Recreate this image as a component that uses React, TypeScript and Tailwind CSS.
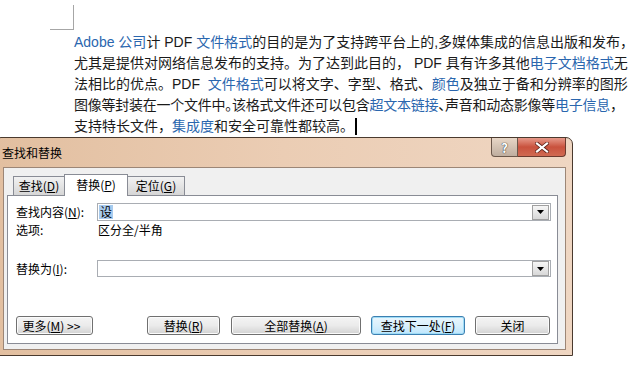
import React from "react";

const blue = "text-[#2a66ae]";

function L({ children }: { children: React.ReactNode }) {
  return <span className={blue}>{children}</span>;
}

function H({ c }: { c: string }) {
  return <span className="[font-feature-settings:'halt']">{c}</span>;
}

function Btn({ children, w, def = false, className = "" }: { children: React.ReactNode; w: string; def?: boolean; className?: string }) {
  return (
    <div
      className={
        "h-[19px] rounded-[3px] border flex items-center justify-center " +
        w +
        " " +
        className +
        " " +
        (def
          ? "border-[#3c7fb1] bg-gradient-to-b from-[#eaf6fd] via-[#d9f0fc] to-[#bee6fd] shadow-[inset_0_0_0_1px_#9fdcf6]"
          : "border-[#707070] bg-gradient-to-b from-[#f4f4f4] via-[#ebebeb] to-[#d2d2d2] shadow-[inset_0_0_0_1px_#fbfbfb]")
      }
    >
      {children}
    </div>
  );
}

function U({ c }: { c: string }) {
  return <span className="underline underline-offset-[1px]">{c}</span>;
}

function DropBtn() {
  return (
    <div className="w-[17px] h-[15px] mr-[1px] border border-[#a0a0a0] bg-gradient-to-b from-[#f6f6f6] to-[#d8d8d8] flex items-center justify-center">
      <svg width="7" height="4" viewBox="0 0 7 4">
        <path d="M0 0 H7 L3.5 4 Z" fill="#000" />
      </svg>
    </div>
  );
}

export default function App() {
  return (
    <div
      className="relative w-[628px] h-[365px] overflow-hidden bg-white"
      style={{ fontFamily: '"Liberation Sans", "Noto Sans CJK SC", sans-serif' }}
    >
      {/* page corner mark */}
      <div className="ml-[50px] mt-[5px] w-[24px] h-[25px] border-r border-b border-[#a6a6a6]" />
      {/* document text */}
      <div className="mt-[2px] pl-[74px] text-[14px] leading-[21px] text-[#1a1a1a] whitespace-nowrap">
        <div>
          <L>Adobe 公司</L>计 PDF <L>文件格式</L>的目的是为了支持跨平台上的,多媒体集成的信息出版和发布，
        </div>
        <div>
          尤其是提供对网络信息发布的支持。为了达到此目的， PDF 具有许多其他<L>电子文档格式</L>无
        </div>
        <div>
          法相比的优点。PDF &nbsp;<L>文件格式</L>可以将文字、字型、格式、<L>颜色</L>及独立于备和分辨率的图形
        </div>
        <div className="tracking-[-0.25px]">
          图像等封装在一个文件中<H c="。" />该格式文件还可以包含<L>超文本链接</L>
          <H c="、" />声音和动态影像等<L>电子信息</L>，
        </div>
        <div className="flex items-center">
          <span>
            支持特长文件，<L>集成度</L>和安全可靠性都较高。
          </span>
          <span className="inline-block w-[2px] h-[17px] bg-black ml-[1px]" />
        </div>
      </div>

      {/* dialog */}
      <div
        className="absolute left-[-6px] top-[137px] w-[579px] h-[219px] rounded-t-[7px] border border-[#4a3a2e] bg-gradient-to-r from-[#e2bfa0] via-[#ebcdb4] to-[#efd6c2] pl-[8px] pr-[6px] pb-[5px] flex flex-col text-[12px] text-black"
        style={{ fontFamily: '"Noto Sans CJK SC", sans-serif' }}
      >
        <div className="h-[29px] flex items-start justify-between">
          <div className="ml-[-1px] mt-[6px] text-[12px] leading-[18px]">查找和替换</div>
          <div className="flex">
            <div className="w-[27px] h-[19px] rounded-bl-[4px] border border-t-0 border-[#6b574a] bg-gradient-to-b from-[#e8d6c6] to-[#bfae9f] flex items-center justify-center">
              <span className="text-[13px] font-bold leading-none text-white [text-shadow:0_0_1px_#333,0_0_1px_#333]">?</span>
            </div>
            <div className="w-[48px] h-[19px] rounded-br-[4px] border border-t-0 border-l-0 border-[#6b3a2e] bg-gradient-to-b from-[#e6998a] via-[#c9513d] to-[#d06a52] flex items-center justify-center">
              <svg width="14" height="11" viewBox="0 0 14 11">
                <path d="M2 1.5 L12 9.5 M12 1.5 L2 9.5" stroke="#5a2018" strokeWidth="3.6" strokeLinecap="square" />
                <path d="M2 1.5 L12 9.5 M12 1.5 L2 9.5" stroke="#ffffff" strokeWidth="2.2" strokeLinecap="square" />
              </svg>
            </div>
          </div>
        </div>

        <div className="h-[183px] border border-[#9c8676] bg-[#f0f0f0] pl-[3px] pr-[7px] pt-[6px] pb-[5px] flex flex-col">
          {/* tabs */}
          <div className="h-[21px] pl-[6px] flex items-end">
            <div className="w-[52px] h-[19px] border border-b-0 border-[#898c95] bg-gradient-to-b from-[#f2f2f2] to-[#d6d6d6] flex items-center justify-center">
              查找(<U c="D" />)
            </div>
            <div className="relative z-10 w-[64px] h-[22px] -mb-px ml-[-1px] border border-b-0 border-[#898c95] bg-white flex items-center justify-center pb-[2px]">
              替换(<U c="P" />)
            </div>
            <div className="w-[58px] h-[19px] ml-[-1px] border border-b-0 border-[#898c95] bg-gradient-to-b from-[#f2f2f2] to-[#d6d6d6] flex items-center justify-center">
              定位(<U c="G" />)
            </div>
          </div>
          {/* content panel */}
          <div className="h-[149px] border border-[#898c95] bg-white pl-[8px] pr-[6px] pt-[7px] flex flex-col">
            <div className="h-[18px] flex items-center">
              <div className="w-[81px]">
                查找内容(<U c="N" />):
              </div>
              <div className="w-[454px] h-[18px] border border-[#a9adb3] flex items-center justify-between">
                <span className="ml-[1px] px-[1px] bg-[#a8cbee] leading-[14px]">设</span>
                <DropBtn />
              </div>
            </div>
            <div className="h-[16px] mt-[1px] flex items-center">
              <div className="w-[82px]">选项:</div>
              <div>区分全/半角</div>
            </div>
            <div className="h-[17px] mt-[22px] flex items-center">
              <div className="w-[81px]">
                替换为(<U c="I" />):
              </div>
              <div className="w-[454px] h-[17px] border border-[#a9adb3] flex items-center justify-end">
                <DropBtn />
              </div>
            </div>
            <div className="mt-[39px] flex items-center">
              <Btn w="w-[77px]">
                <span className="ml-[-6px]">
                  更多(<U c="M" />) &gt;&gt;
                </span>
              </Btn>
              <Btn w="w-[73px]" className="ml-[54px]">
                替换(<U c="R" />)
              </Btn>
              <Btn w="w-[130px]" className="ml-[11px]">
                全部替换(<U c="A" />)
              </Btn>
              <Btn w="w-[94px]" className="ml-[10px]" def>
                查找下一处(<U c="F" />)
              </Btn>
              <Btn w="w-[75px]" className="ml-[10px]">
                关闭
              </Btn>
            </div>
          </div>
        </div>
      </div>
    </div>
  );
}
